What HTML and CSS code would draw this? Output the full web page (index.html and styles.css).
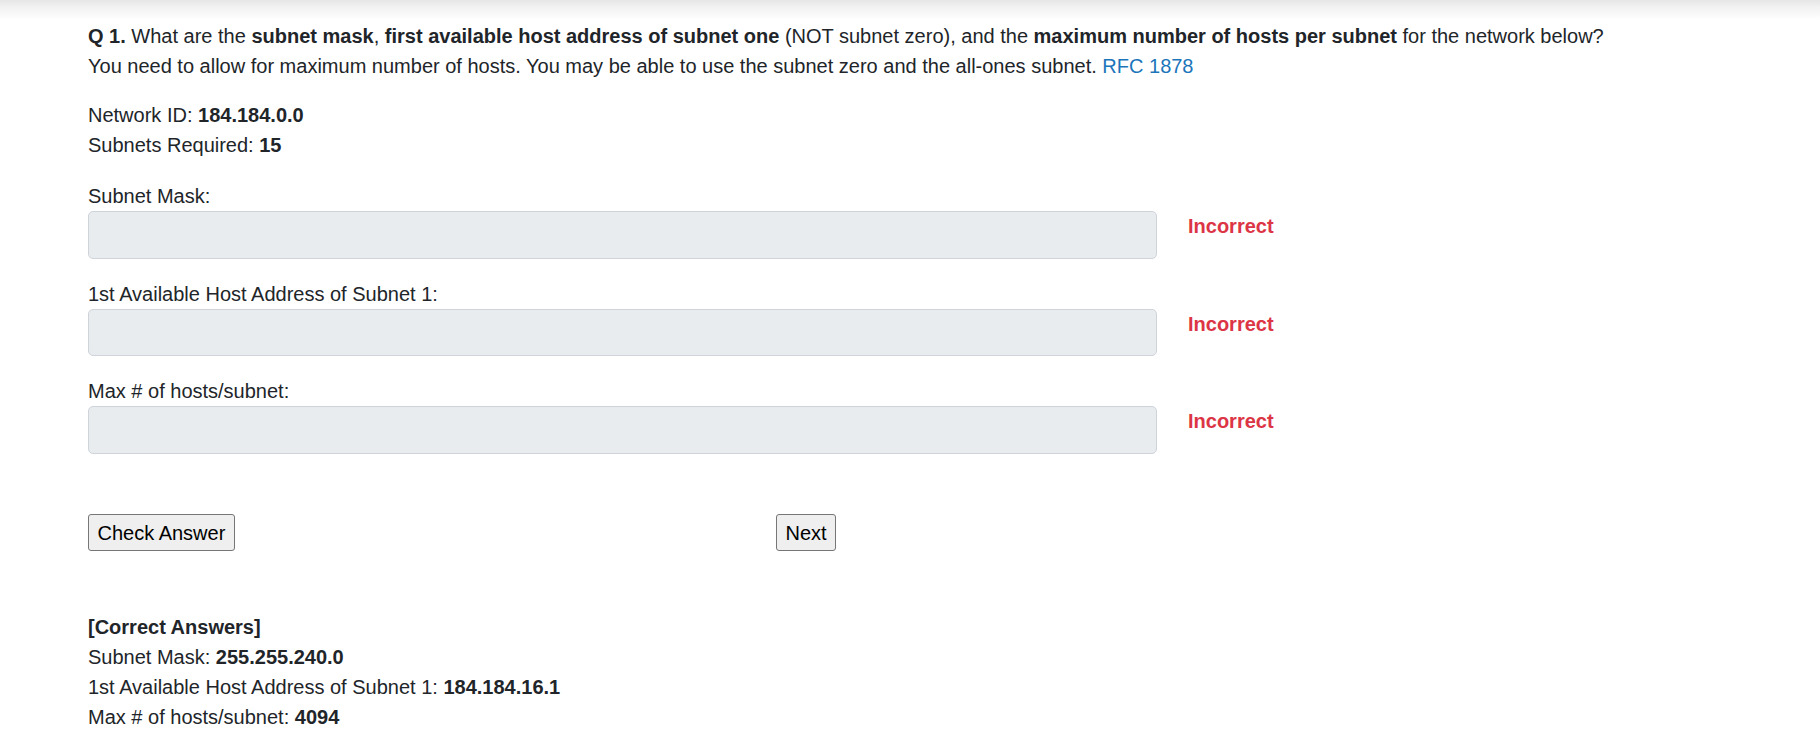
FILE: index.html
```html
<!DOCTYPE html>
<html lang="en">
<head>
<meta charset="utf-8">
<title>Subnetting Question</title>
<link rel="stylesheet" href="styles.css">
</head>
<body>
<div class="shade"></div>
<main class="page">
  <p class="question"><b>Q 1.</b> What are the <b>subnet mask</b>, <b>first available host address of subnet one</b> (NOT subnet zero), and the <b>maximum number of hosts per subnet</b> for the network below?<br>You need to allow for maximum number of hosts. You may be able to use the subnet zero and the all-ones subnet. <a href="#" class="link">RFC 1878</a></p>
  <p class="given">Network ID: <b>184.184.0.0</b><br>Subnets Required: <b>15</b></p>

  <div class="field">
    <label class="label">Subnet Mask:</label>
    <div class="field-row">
      <input class="input" type="text" disabled>
      <span class="bad">Incorrect</span>
    </div>
  </div>

  <div class="field">
    <label class="label">1st Available Host Address of Subnet 1:</label>
    <div class="field-row">
      <input class="input" type="text" disabled>
      <span class="bad">Incorrect</span>
    </div>
  </div>

  <div class="field">
    <label class="label">Max # of hosts/subnet:</label>
    <div class="field-row">
      <input class="input" type="text" disabled>
      <span class="bad">Incorrect</span>
    </div>
  </div>

  <div class="actions">
    <div class="actions-left"><button class="btn" type="button">Check Answer</button></div>
    <div class="actions-right"><button class="btn" type="button">Next</button></div>
  </div>

  <div class="answers">
    <b>[Correct Answers]</b><br>
    Subnet Mask: <b>255.255.240.0</b><br>
    1st Available Host Address of Subnet 1: <b>184.184.16.1</b><br>
    Max # of hosts/subnet: <b>4094</b>
  </div>
</main>
</body>
</html>
```

FILE: styles.css
```css
html, body {
  margin: 0;
  padding: 0;
  background: #ffffff;
}

body {
  font-family: "Liberation Sans", Arial, sans-serif;
  font-size: 20px;
  line-height: 30px;
  color: #212529;
}

.shade {
  height: 20px;
  background: linear-gradient(to bottom, #e6e6e6 0%, #f4f4f4 45%, #ffffff 100%);
}

.page {
  padding: 1px 0 0 88px;
}

p {
  margin: 0 0 19px 0;
}

b {
  font-weight: 700;
}

.link {
  color: #1b75bb;
  text-decoration: none;
}

.given {
  margin-bottom: 21px;
}

.field {
  margin-bottom: 20px;
}

.label {
  display: block;
}

.field-row {
  display: flex;
  align-items: flex-start;
  gap: 31px;
}

.input {
  box-sizing: border-box;
  width: 1069px;
  height: 47.5px;
  margin: 0;
  padding: 6px 15px;
  background: #e9ecef;
  border: 1px solid #ced4da;
  border-radius: 5px;
  font: inherit;
}

.bad {
  color: #dc3545;
  font-weight: 700;
}

.actions {
  display: flex;
  margin-top: 60.5px;
}

.actions-left {
  width: 688px;
}

.btn {
  box-sizing: border-box;
  height: 37px;
  margin: 0;
  padding: 0 8.5px;
  font-family: "Liberation Sans", Arial, sans-serif;
  font-size: 20px;
  line-height: 30px;
  color: #000000;
  background: #efefef;
  border: 1px solid #767676;
  border-radius: 3px;
}

.answers {
  margin-top: 61px;
}
```
